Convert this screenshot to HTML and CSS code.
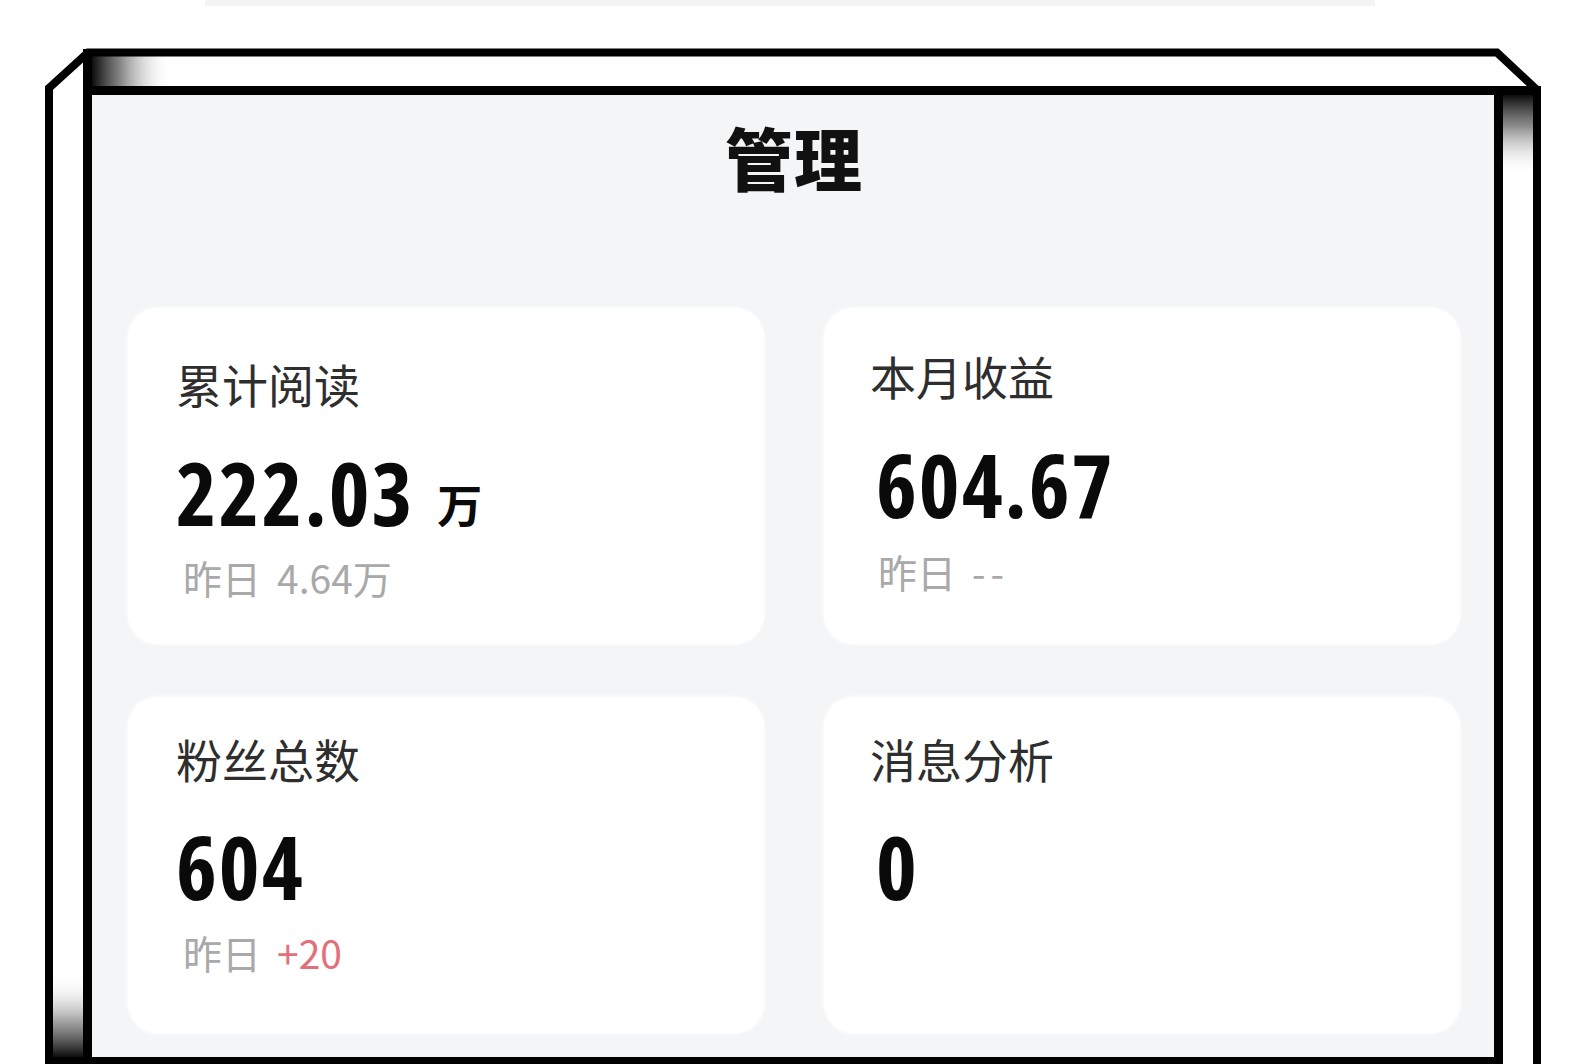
FILE: index.html
```html
<!DOCTYPE html>
<html lang="zh-CN">
<head>
<meta charset="utf-8">
<title>管理</title>
<link rel="stylesheet" href="styles.css">
</head>
<body>
<div class="scene">
  <svg class="frame" width="1587" height="1064" viewBox="0 0 1587 1064" aria-hidden="true">
    <defs>
      <linearGradient id="gTop" x1="0" y1="0" x2="1" y2="0">
        <stop offset="0" stop-color="#000" stop-opacity="0.95"/>
        <stop offset="0.35" stop-color="#333" stop-opacity="0.6"/>
        <stop offset="1" stop-color="#fff" stop-opacity="0"/>
      </linearGradient>
      <linearGradient id="gRight" x1="0" y1="0" x2="0" y2="1">
        <stop offset="0" stop-color="#000" stop-opacity="0.95"/>
        <stop offset="0.4" stop-color="#444" stop-opacity="0.6"/>
        <stop offset="1" stop-color="#fff" stop-opacity="0"/>
      </linearGradient>
      <linearGradient id="gLeft" x1="0" y1="0" x2="0" y2="1">
        <stop offset="0" stop-color="#fff" stop-opacity="0"/>
        <stop offset="0.6" stop-color="#444" stop-opacity="0.55"/>
        <stop offset="1" stop-color="#000" stop-opacity="0.95"/>
      </linearGradient>
    </defs>
    <rect x="205" y="0" width="1170" height="6" fill="#f4f4f4"/>
    <rect x="92" y="56" width="80" height="30" fill="url(#gTop)"/>
    <rect x="1503" y="95" width="30" height="80" fill="url(#gRight)"/>
    <rect x="53" y="975" width="30" height="82" fill="url(#gLeft)"/>
    <path d="M49 1070 V88 L88 52.5 H1497 L1537 90 V1070" stroke="#000" stroke-width="8" fill="none" stroke-linejoin="miter"/>
    <rect x="83" y="49" width="9" height="40" fill="#000"/>
    <rect x="1494" y="86" width="47" height="9" fill="#000"/>
    <rect x="45" y="1057" width="42" height="8" fill="#000"/>
  </svg>

  <section class="panel">
    <h1 class="title">管理</h1>
    <div class="grid">
      <div class="card card--a">
        <div class="label">累计阅读</div>
        <div class="value">222.03<span class="unit">万</span></div>
        <div class="sub"><span class="sub-key">昨日</span><span class="sub-val">4.64万</span></div>
      </div>
      <div class="card card--b">
        <div class="label">本月收益</div>
        <div class="value">604.67</div>
        <div class="sub"><span class="sub-key">昨日</span><span class="sub-val sub-val--dash">--</span></div>
      </div>
      <div class="card card--c">
        <div class="label">粉丝总数</div>
        <div class="value">604</div>
        <div class="sub"><span class="sub-key">昨日</span><span class="sub-val sub-val--up">+20</span></div>
      </div>
      <div class="card card--d">
        <div class="label">消息分析</div>
        <div class="value">0</div>
      </div>
    </div>
  </section>
</div>
</body>
</html>
```

FILE: styles.css
```css
html, body {
  margin: 0;
  padding: 0;
  background: #fff;
}

body {
  width: 1587px;
  height: 1064px;
  overflow: hidden;
  font-family: "Noto Sans CJK SC", "Noto Sans", sans-serif;
}

.scene {
  position: relative;
  width: 1587px;
  height: 1064px;
  box-sizing: border-box;
  padding: 86px 0 0 83px;
}

.frame {
  position: absolute;
  left: 0;
  top: 0;
}

.panel {
  position: relative;
  box-sizing: border-box;
  width: 1420px;
  height: 979px;
  border: 9px solid #000;
  border-bottom-width: 8px;
  background: #f4f5f7;
  padding: 28px 34px 0 36px;
}

.title {
  margin: 0;
  text-align: center;
  font-size: 68px;
  line-height: 68px;
  font-weight: 900;
  color: #111;
  letter-spacing: 1px;
}

.grid {
  margin-top: 117px;
  display: grid;
  grid-template-columns: 636px 636px;
  grid-auto-rows: 336px;
  column-gap: 60px;
  row-gap: 53px;
}

.card {
  background: #fff;
  border-radius: 30px;
  box-sizing: border-box;
  padding-left: 48px;
  display: flex;
  flex-direction: column;
  box-shadow: 0 0 3px 1px rgba(255, 255, 255, 0.8);
}

.card--a { padding-top: 52px; }
.card--b { padding-top: 44px; padding-left: 46px; }
.card--c { padding-top: 38px; }
.card--d { padding-top: 38px; padding-left: 46px; }

.label {
  font-size: 46px;
  line-height: 46px;
  color: #2e2e2e;
  font-weight: 400;
}

.value {
  margin-top: 43px;
  font-family: "Open Sans", "DejaVu Sans Condensed", sans-serif;
  font-stretch: 75%;
  font-weight: 700;
  font-size: 87px;
  line-height: 87px;
  letter-spacing: 2px;
  color: #0a0a0a;
}

.card--b .value,
.card--d .value { padding-left: 6px; }

.card--c .value,
.card--d .value { margin-top: 42px; }

.unit {
  font-family: "Noto Sans CJK SC", sans-serif;
  font-stretch: 100%;
  font-size: 45px;
  line-height: 0;
  font-weight: 700;
  letter-spacing: 0;
  margin-left: 23px;
  vertical-align: 3px;
}

.sub {
  margin-top: 20px;
  padding-left: 7px;
  font-size: 39px;
  line-height: 42px;
  color: #a9a9a9;
  display: flex;
  align-items: baseline;
}

.card--b .sub { margin-top: 22px; padding-left: 8px; }
.card--c .sub { margin-top: 21px; }

.sub-val {
  margin-left: 16px;
}

.sub-val--dash {
  letter-spacing: 5px;
}

.sub-val--up {
  color: #e2707c;
}
```
